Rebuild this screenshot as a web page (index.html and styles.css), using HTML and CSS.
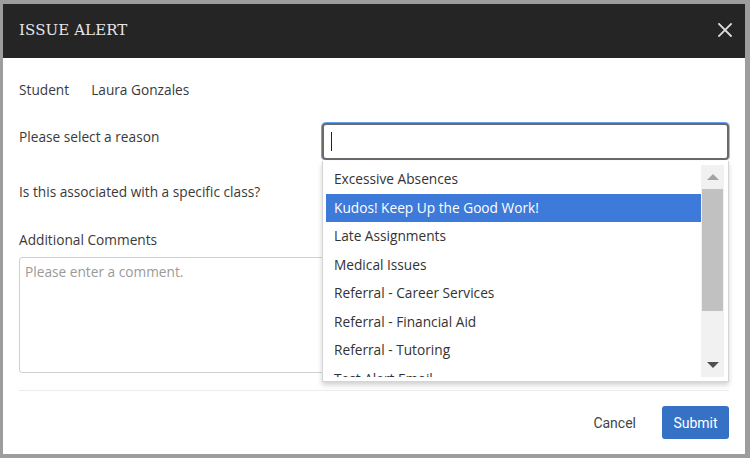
FILE: index.html
```html
<!DOCTYPE html>
<html lang="en">
<head>
<meta charset="utf-8">
<title>Issue Alert</title>
<link rel="stylesheet" href="styles.css">
</head>
<body>
<div class="modal">
  <header class="modal-header">
    <h1 class="modal-title">ISSUE ALERT</h1>
    <button class="close-btn" aria-label="Close">
      <svg width="14" height="14" viewBox="0 0 14 14"><path d="M1 1L13 13M13 1L1 13" stroke="#dcdcdc" stroke-width="1.8" stroke-linecap="square"/></svg>
    </button>
  </header>

  <div class="modal-body">
    <div class="student-row">
      <span>Student</span>
      <span>Laura Gonzales</span>
    </div>

    <div class="field-row reason-row">
      <label class="field-label">Please select a reason</label>
      <div class="combo">
        <div class="combo-input"><span class="caret"></span></div>
        <div class="dropdown">
          <ul class="options">
            <li>Excessive Absences</li>
            <li class="active">Kudos! Keep Up the Good Work!</li>
            <li>Late Assignments</li>
            <li>Medical Issues</li>
            <li>Referral - Career Services</li>
            <li>Referral - Financial Aid</li>
            <li>Referral - Tutoring</li>
            <li>Test Alert Email</li>
          </ul>
          <div class="scrollbar">
            <div class="sb-btn up"><span></span></div>
            <div class="sb-thumb"></div>
            <div class="sb-rest"></div>
            <div class="sb-btn down"><span></span></div>
          </div>
        </div>
      </div>
    </div>

    <div class="field-row class-row">
      <label class="field-label">Is this associated with a specific class?</label>
    </div>

    <div class="comments">
      <label class="field-label">Additional Comments</label>
      <div class="textarea">Please enter a comment.</div>
    </div>
  </div>

  <footer class="modal-footer">
    <button class="btn-cancel">Cancel</button>
    <button class="btn-submit">Submit</button>
  </footer>
</div>
</body>
</html>
```

FILE: styles.css
```css
* { box-sizing: border-box; }

html, body { height: 100%; }

body {
  margin: 0;
  padding: 4px 5px 4px 3px;
  background: #9d9d9d;
  font-family: "Open Sans", "Liberation Sans", sans-serif;
  font-size: 13.7px;
  color: #3a3a3a;
}

.modal {
  position: relative;
  height: 450px;
  background: #fff;
  display: flex;
  flex-direction: column;
}

.modal-header {
  height: 54px;
  background: #252525;
  display: flex;
  align-items: center;
  justify-content: space-between;
  padding: 0 13px 2px 16px;
}

.modal-title {
  margin: 0;
  font-family: "DejaVu Serif", "Liberation Serif", serif;
  font-weight: normal;
  font-size: 15px;
  color: #e6e6e6;
  letter-spacing: 0.1px;
}

.close-btn {
  background: none;
  border: 0;
  padding: 0;
  width: 14px;
  height: 14px;
  display: flex;
}

.modal-body {
  padding: 0 16px;
  flex: 1;
}

.student-row {
  margin-top: 22px;
  line-height: 20px;
  display: flex;
  gap: 22px;
}

.field-row {
  display: grid;
  grid-template-columns: 303px 1fr;
}

.field-label {
  line-height: 20px;
  display: block;
}

.reason-row { margin-top: 23px; }
.reason-row .field-label { padding-top: 4px; }

.combo { position: relative; }

.combo-input {
  height: 37px;
  border: 2px solid #6a6a6a;
  border-radius: 4px;
  box-shadow: 0 -1px 0 #6a9ff0, -1px 0 0 #6a9ff0, 1px 0 0 #9bbcf0;
  display: flex;
  align-items: center;
  padding-left: 7px;
}

.caret {
  width: 1px;
  height: 19px;
  background: #222;
}

.dropdown {
  position: absolute;
  top: 38px;
  left: 0;
  width: 407px;
  height: 221px;
  background: #fff;
  border: 1px solid #d4d4d4;
  border-top: 0;
  box-shadow: 0 3px 5px rgba(0, 0, 0, 0.18);
  padding: 4px 4px 4px 3px;
  display: flex;
  z-index: 2;
}

.options {
  list-style: none;
  margin: 0;
  padding: 0;
  flex: 1;
  overflow: hidden;
}

.options li {
  height: 28.5px;
  line-height: 28.5px;
  padding-left: 8px;
  color: #333;
  white-space: nowrap;
}

.options li.active {
  background: #3d7ad9;
  color: #fff;
}

.scrollbar {
  width: 23px;
  background: #f1f1f1;
  display: flex;
  flex-direction: column;
}

.sb-btn {
  height: 24px;
  display: flex;
  align-items: center;
  justify-content: center;
}

.sb-btn span {
  width: 0;
  height: 0;
  border-left: 6px solid transparent;
  border-right: 6px solid transparent;
}

.sb-btn.up span { border-bottom: 6px solid #a3a3a3; }
.sb-btn.down span { border-top: 6px solid #505050; }

.sb-thumb {
  height: 122px;
  background: #c1c1c1;
  margin: 0 1px;
}

.sb-rest { flex: 1; }

.class-row { margin-top: 22px; }

.comments { margin-top: 28px; }

.textarea {
  margin-top: 7px;
  height: 116px;
  border: 1px solid #cfcfcf;
  border-radius: 3px;
  padding: 4px 5px;
  color: #9a9a9a;
  line-height: 20px;
}

.modal-footer {
  margin: 0 16px;
  border-top: 1px solid #ececec;
  padding: 15px 0 15px;
  display: flex;
  justify-content: flex-end;
  align-items: center;
  gap: 26px;
}

.btn-cancel, .btn-submit {
  font-family: Roboto, "Liberation Sans", sans-serif;
  font-size: 14px;
  border: 0;
  cursor: pointer;
}

.btn-cancel {
  background: none;
  color: #444;
  padding: 0;
}

.btn-submit {
  width: 67px;
  height: 33px;
  background: #3571c4;
  color: #fff;
  border-radius: 3px;
  padding: 0;
}
```
